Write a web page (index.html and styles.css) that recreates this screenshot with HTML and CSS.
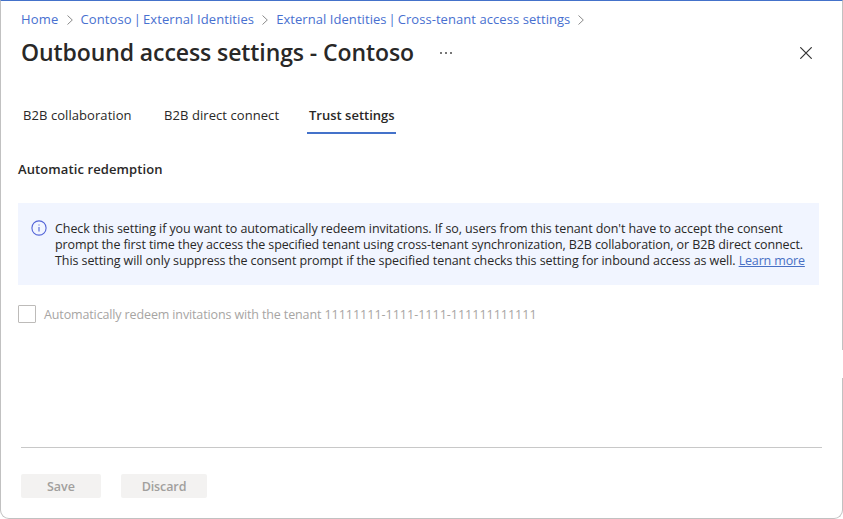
FILE: index.html
```html
<!DOCTYPE html>
<html lang="en">
<head>
<meta charset="utf-8">
<title>Outbound access settings - Contoso</title>
<link rel="stylesheet" href="styles.css">
</head>
<body>
<main class="blade">
  <nav class="crumbs">
    <a class="c1">Home</a>
    <svg class="chev" viewBox="0 0 6 10"><path d="M.5.5 5.3 5 .5 9.5"/></svg>
    <a class="c2">Contoso <span class="pipe">|</span> External Identities</a>
    <svg class="chev" viewBox="0 0 6 10"><path d="M.5.5 5.3 5 .5 9.5"/></svg>
    <a class="c3">External Identities <span class="pipe">|</span> Cross-tenant access settings</a>
    <svg class="chev" viewBox="0 0 6 10"><path d="M.5.5 5.3 5 .5 9.5"/></svg>
  </nav>
  <header class="heading">
    <h1>Outbound access settings - Contoso</h1>
    <svg class="more" viewBox="0 0 12 2"><path d="M0 0h2v2H0zM5 0h2v2H5zM10 0h2v2h-2z"/></svg>
    <svg class="close" viewBox="0 0 12 12"><path d="M.3.3 11.7 11.7M11.7.3.3 11.7"/></svg>
  </header>
  <div class="tabs">
    <span class="tab t1">B2B collaboration</span>
    <span class="tab t2">B2B direct connect</span>
    <span class="tab active">Trust settings</span>
  </div>
  <h2>Automatic redemption</h2>
  <section class="info">
    <svg class="info-icon" viewBox="0 0 16 16"><circle cx="8" cy="8" r="7.1"/><path d="M8 7v4.5M8 4.4v1.2"/></svg>
    <div class="message">
      <div class="m1">Check this setting if you want to automatically redeem invitations. If so, users from this tenant don't have to accept the consent</div>
      <div class="m2">prompt the first time they access the specified tenant using cross-tenant synchronization, B2B collaboration, or B2B direct connect.</div>
      <div class="m3">This setting will only suppress the consent prompt if the specified tenant checks this setting for inbound access as well. <a class="learn">Learn more</a></div>
    </div>
  </section>
  <div class="option">
    <span class="box"></span>
    <span class="option-label">Automatically redeem invitations with the tenant <span class="tenant">11111111-1111-1111-111111111111</span></span>
  </div>
  <footer class="actions">
    <span class="button save">Save</span>
    <span class="button discard">Discard</span>
  </footer>
  <i class="edge-gap"></i>
</main>
</body>
</html>
```

FILE: styles.css
```css
* { box-sizing: border-box; }
html { background: #fff; }
body {
  margin: 0;
  overflow: hidden;
  font: 13px/16px "Open Sans", "Noto Sans", sans-serif;
  color: #292827;
}
.blade {
  position: relative;
  display: flex;
  flex-direction: column;
  width: 843px;
  height: 519px;
  border: 1px solid #c1c1c1;
  border-top-color: #4472ca;
  border-radius: 0 0 9px 9px;
  background: #fff;
}
.crumbs {
  display: flex;
  align-items: center;
  height: 18px;
  margin: 9px 0 0 20px;
  gap: 8px;
  color: #4870d0;
  white-space: nowrap;
}
.c1 { letter-spacing: 0.2px; }
.c2 { letter-spacing: 0.1px; }
.c3 { letter-spacing: 0.06px; }
.pipe { margin: 0 -1.5px; }
.chev { width: 6px; height: 10px; margin-top: 2px; fill: none; stroke: #8a8a8a; stroke-width: 1; }
.heading {
  display: flex;
  align-items: center;
  height: 32px;
  margin: 9px 0 0 20px;
}
h1 {
  width: 393px;
  margin: -2px 0 0;
  font-size: 23px;
  font-weight: 600;
  line-height: 32px;
  letter-spacing: -0.09px;
  white-space: nowrap;
}
.more { width: 12px; height: 2px; margin-left: 26px; fill: #777; }
.close { width: 12px; height: 12px; margin: 0 30px 0 auto; fill: none; stroke: #333; stroke-width: 1.2; }
.tabs {
  display: flex;
  height: 34px;
  margin: 31px 0 0 22px;
  white-space: nowrap;
}
.tab { line-height: 30px; letter-spacing: 0.07px; }
.t1 { width: 141px; }
.t2 { width: 143px; }
.active { width: 89px; padding-left: 2px; font-weight: 600; letter-spacing: 0; border-bottom: 2px solid #4472ca; }
h2 {
  margin: 26px 0 0 17px;
  font-size: 13px;
  font-weight: 600;
  line-height: 18px;
  letter-spacing: 0.1px;
}
.info {
  display: flex;
  width: 801px;
  height: 82px;
  margin: 25px 0 0 17px;
  padding: 17px 0 0 13px;
  background: #f1f5ff;
}
.info-icon { width: 16px; height: 16px; margin-right: 8px; flex: none; fill: none; stroke: #5364d8; stroke-width: 1.1; }
.message { margin-top: 1px; font-size: 12.5px; letter-spacing: -0.08px; white-space: nowrap; }
.m2 { letter-spacing: -0.105px; }
.learn { color: #4870c5; text-decoration: underline; letter-spacing: -0.15px; }
.option { display: flex; align-items: center; height: 18px; margin: 20px 0 0 17px; color: #a7a5a3; font-size: 12.5px; letter-spacing: -0.13px; white-space: nowrap; }
.option-label { padding-top: 2px; }
.tenant { letter-spacing: 0; }
.box { width: 18px; height: 18px; margin-right: 8px; border: 1px solid #bdbbb9; border-radius: 1px; }
.actions {
  display: flex;
  gap: 20px;
  width: 801px;
  margin: 124px 0 0 20px;
  padding-top: 26px;
  border-top: 1px solid #c8c8c8;
}
.button {
  height: 24px;
  border-radius: 2px;
  background: #f3f2f1;
  color: #a19f9d;
  font-size: 12.5px;
  font-weight: 600;
  line-height: 26px;
  text-align: center;
}
.save { width: 80px; }
.discard { width: 86px; letter-spacing: -0.1px; }
.edge-gap { position: absolute; top: 349px; right: -1px; width: 1px; height: 28px; background: #fff; }
```
